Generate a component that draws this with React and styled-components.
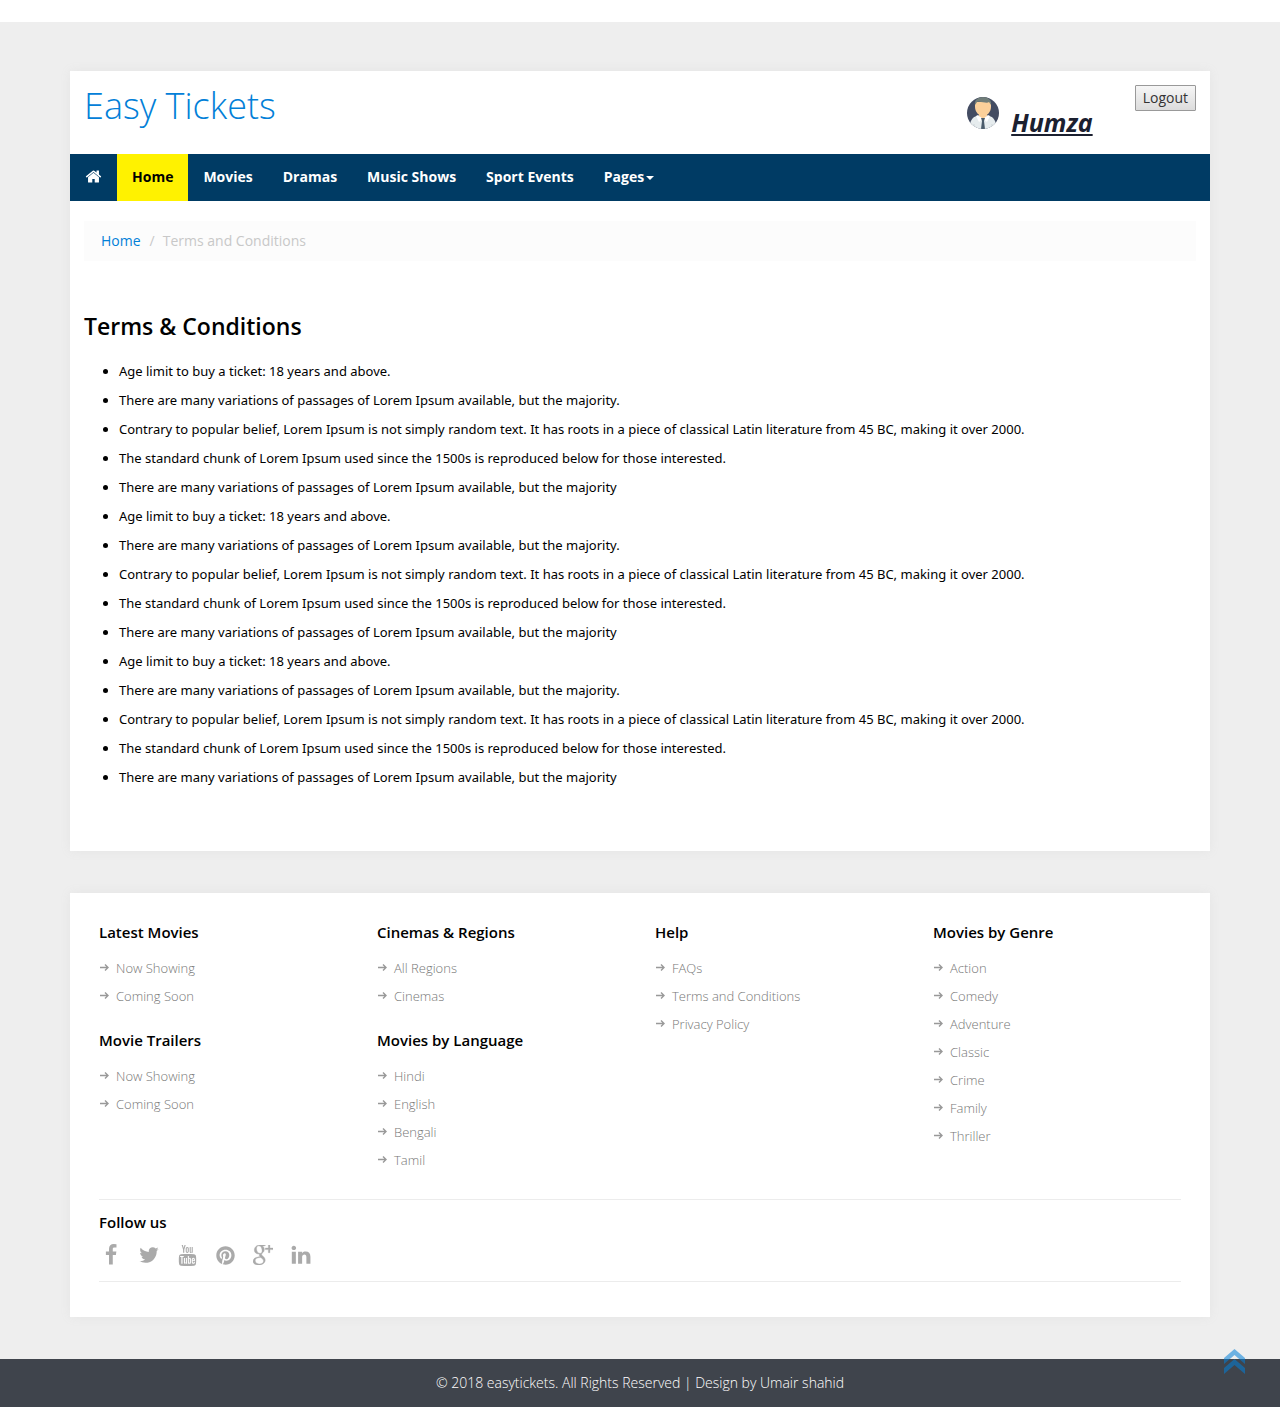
import React from "react";
import styled, { createGlobalStyle } from "styled-components";
import { FaPinterest } from "react-icons/fa";
import { TfiYoutube, TfiGoogle } from "react-icons/tfi";

const Global = createGlobalStyle`
  *, *::before, *::after { box-sizing: border-box; }
  body {
    margin: 0;
    padding-top: 22px;
    background: #fff;
    color: #000;
    font: 400 14px/20px "Open Sans", "Noto Sans", sans-serif;
  }
  a { color: inherit; text-decoration: none; }
  h1, h2, h3, ul, ol, p { margin: 0; padding: 0; font-weight: inherit; }
`;

const Page = styled.div`
  display: flex;
  flex-direction: column;
  gap: 42px;
  padding: 49px 70px 42px;
  background: #eee;
`;

const Card = styled.div`
  width: 100%;
  max-width: 1140px;
  margin: 0 auto;
  background: #fff;
  box-shadow: 0 0 10px #e4e4e4;
`;

const Header = styled.header`
  display: flex;
  align-items: flex-start;
  justify-content: space-between;
  padding: 14px 14px 19px;
`;

const Brand = styled.h1`
  color: #0280d8;
  font-size: 36px;
  line-height: 41px;
  font-weight: 300;
`;

const Account = styled.div`
  display: flex;
  align-items: flex-start;
  gap: 42px;
`;

const Profile = styled.a`
  display: flex;
  gap: 12px;
  padding-top: 12px;
  color: #1b2030;
  font: italic 700 25px/26px "Open Sans", sans-serif;
  text-decoration: underline;
  span { padding-top: 12px; }
`;

const Logout = styled.button`
  height: 26px;
  padding: 0 7px;
  border: 1px solid #999;
  border-radius: 1px;
  background: linear-gradient(#f6f6f6, #dcdcdc);
  color: #333;
  font: 400 14px/20px "Open Sans", sans-serif;
`;

const Nav = styled.nav`
  display: flex;
  background: #003b64;
  font-weight: 700;
`;

const NavLink = styled.a`
  display: flex;
  align-items: center;
  gap: 2px;
  height: 47px;
  padding: 0 15px 2px;
  background: ${(p) => (p.$active ? "#fff200" : "transparent")};
  color: ${(p) => (p.$active ? "#000" : "#fff")};
`;

const Caret = styled.span`
  margin-top: 2px;
  border: 4px solid transparent;
  border-top-color: currentColor;
  border-bottom: 0;
`;

const Breadcrumb = styled.ol`
  display: flex;
  gap: 9px;
  margin: 20px 14px 0;
  padding: 10px 17px;
  list-style: none;
  background: #fcfcfc;
  color: #c8c8c8;
  a { color: #0280d8; }
  li + li::before { content: "/"; margin-right: 8px; }
`;

const Terms = styled.main`
  padding: 48px 14px 59px;
`;

const Title = styled.h2`
  font-size: 23px;
  line-height: 34px;
  font-weight: 600;
`;

const TermList = styled.ul`
  margin-top: 14px;
  padding-left: 35px;
  font: 400 13px/29px "Noto Sans", sans-serif;
`;

const Links = styled.footer`
  padding: 29px 29px 35px;
`;

const Columns = styled.div`
  display: grid;
  grid-template-columns: repeat(4, 1fr);
  column-gap: 30px;
  min-height: 277px;
`;

const Column = styled.div`
  display: flex;
  flex-direction: column;
  gap: 20px;
`;

const GroupTitle = styled.h3`
  font-size: 15px;
  line-height: 20px;
  font-weight: 600;
`;

const GroupList = styled.ul`
  margin-top: 12px;
  list-style: none;
`;

const GroupLink = styled.a`
  display: flex;
  align-items: center;
  gap: 6px;
  color: #777;
  font-size: 13px;
  line-height: 28px;
  font-weight: 300;
`;

const Follow = styled.section`
  padding: 12px 0 15px;
  border: solid #ececec;
  border-width: 1px 0;
`;

const Social = styled.ul`
  display: flex;
  gap: 16px;
  margin-top: 12px;
  padding-left: 1px;
  list-style: none;
  a {
    display: flex;
    align-items: center;
    justify-content: center;
    width: 22px;
    height: 22px;
    color: #aaa;
  }
`;

const Copyright = styled.div`
  padding: 14px 20px;
  background: #3f444c;
  color: #fff;
  font-weight: 300;
  text-align: center;
`;

const ToTop = styled.a`
  position: fixed;
  right: 35px;
  bottom: 32px;
  height: 26px;
`;

const glyphs = {
  home: "M1472 992v480q0 26-19 45t-45 19h-384v-384h-256v384h-384q-26 0-45-19t-19-45v-480q0-1 .5-3t.5-3l575-474 575 474q1 2 1 6zm223-69l-62 74q-8 9-21 11h-3q-13 0-21-7l-692-577-692 577q-12 8-24 7-13-2-21-11l-62-74q-8-10-7-23.5t11-21.5l719-599q32-26 76-26t76 26l244 204v-195q0-14 9-23t23-9h192q14 0 23 9t9 23v408l219 182q10 8 11 21.5t-7 23.5z",
  facebook: "M1343 12v264h-157q-86 0-116 36t-30 108v189h293l-39 296h-254v759h-306v-759h-255v-296h255v-218q0-186 104-288.5t277-102.5q147 0 228 12z",
  twitter: "M1684 408q-67 98-162 167 1 14 1 42 0 130-38 259.5t-115.5 248.5-184.5 210.5-258 146-323 54.5q-271 0-496-145 35 4 78 4 225 0 401-138-105-2-188-64.5t-114-159.5q33 5 61 5 43 0 85-11-112-23-185.5-111.5t-73.5-205.5v-4q68 38 146 41-66-44-105-115t-39-154q0-88 44-163 121 149 294.5 238.5t371.5 99.5q-8-38-8-74 0-134 94.5-228.5t228.5-94.5q140 0 236 102 109-21 205-78-37 115-142 178 93-10 186-50z",
  linkedin: "M477 625v991h-330v-991h330zm21-306q1 73-50.5 122t-135.5 49h-2q-82 0-132-49t-50-122q0-74 51.5-122.5t134.5-48.5 133 48.5 51 122.5zm1166 729v568h-329v-530q0-105-40.5-164.5t-126.5-59.5q-63 0-105.5 34.5t-63.5 85.5q-11 30-11 81v553h-329q2-399 2-647t-1-296l-1-48h329v144h-2q20-32 41-56t56.5-52 87-43.5 114.5-15.5q171 0 275 113.5t104 332.5z",
};

const Glyph = ({ name, size }) => (
  <svg width={size} height={size} viewBox="0 0 1792 1792" fill="currentColor" aria-hidden="true">
    <path d={glyphs[name]} />
  </svg>
);

const Arrow = () => (
  <svg width="11" height="11" viewBox="0 0 11 11" fill="none" stroke="#999" strokeWidth="1.4" aria-hidden="true">
    <path d="M1 4.5h8M6 1.5l3 3-3 3" />
  </svg>
);

const Avatar = () => (
  <svg width="32" height="32" viewBox="0 0 32 32" aria-hidden="true">
    <clipPath id="face"><circle cx="16" cy="16" r="16" /></clipPath>
    <g clipPath="url(#face)">
      <path fill="#434c62" d="M0 0h32v32H0z" />
      <path fill="#e6ecee" d="M2 32c1-8 3-12 8-13l6 2 6-2c5 1 7 5 8 13z" />
      <path fill="#fbd09a" d="M12 14h8v5l-4 4-4-4z" />
      <path fill="#fbd09a" d="M8 5h16v5c0 5-4 9-8 9s-8-4-8-9z" />
      <path fill="#707d79" d="M8 8C7 3 11 0 16 0s9 3 8 8l-2-3c-2 2-8-1-12 0z" />
      <path fill="#fff" d="M11 18l5 4-4 3-3-6zM21 18l-5 4 4 3 3-6z" />
      <path fill="#4b5c6c" d="M14 21h4l-1 3 1 8h-4l1-8z" />
      <path stroke="#cdd5d8" fill="none" d="M7 32v-5M25 32v-5" />
    </g>
  </svg>
);

const terms = [
  "Age limit to buy a ticket: 18 years and above.",
  "There are many variations of passages of Lorem Ipsum available, but the majority.",
  "Contrary to popular belief, Lorem Ipsum is not simply random text. It has roots in a piece of classical Latin literature from 45 BC, making it over 2000.",
  "The standard chunk of Lorem Ipsum used since the 1500s is reproduced below for those interested.",
  "There are many variations of passages of Lorem Ipsum available, but the majority",
];

const columns = [
  [["Latest Movies", ["Now Showing", "Coming Soon"]], ["Movie Trailers", ["Now Showing", "Coming Soon"]]],
  [["Cinemas & Regions", ["All Regions", "Cinemas"]], ["Movies by Language", ["Hindi", "English", "Bengali", "Tamil"]]],
  [["Help", ["FAQs", "Terms and Conditions", "Privacy Policy"]]],
  [["Movies by Genre", ["Action", "Comedy", "Adventure", "Classic", "Crime", "Family", "Thriller"]]],
];

const social = [
  ["Facebook", <Glyph name="facebook" size={22} />],
  ["Twitter", <Glyph name="twitter" size={22} />],
  ["YouTube", <TfiYoutube size={21} />],
  ["Pinterest", <FaPinterest size={19} />],
  ["Google Plus", <TfiGoogle size={20} strokeWidth="0.3" />],
  ["LinkedIn", <Glyph name="linkedin" size={22} />],
];

export default function App() {
  return (
    <>
      <Global />
      <Page>
        <Card>
          <Header>
            <Brand><a href="#home">Easy Tickets</a></Brand>
            <Account>
              <Profile href="#profile"><Avatar /><span>Humza</span></Profile>
              <Logout type="button">Logout</Logout>
            </Account>
          </Header>
          <Nav>
            <NavLink href="#home" aria-label="Start page"><Glyph name="home" size={17} /></NavLink>
            <NavLink href="#home" $active>Home</NavLink>
            {["Movies", "Dramas", "Music Shows", "Sport Events"].map((t) => (
              <NavLink href="#list" key={t}>{t}</NavLink>
            ))}
            <NavLink href="#pages">Pages<Caret /></NavLink>
          </Nav>
          <Breadcrumb>
            <li><a href="#home">Home</a></li>
            <li>Terms and Conditions</li>
          </Breadcrumb>
          <Terms>
            <Title>Terms &amp; Conditions</Title>
            <TermList>
              {[...terms, ...terms, ...terms].map((t, i) => <li key={i}>{t}</li>)}
            </TermList>
          </Terms>
        </Card>
        <Card>
          <Links>
            <Columns>
              {columns.map((groups, i) => (
                <Column key={i}>
                  {groups.map(([title, items]) => (
                    <section key={title}>
                      <GroupTitle>{title}</GroupTitle>
                      <GroupList>
                        {items.map((t) => (
                          <li key={t}><GroupLink href="#list"><Arrow />{t}</GroupLink></li>
                        ))}
                      </GroupList>
                    </section>
                  ))}
                </Column>
              ))}
            </Columns>
            <Follow>
              <GroupTitle>Follow us</GroupTitle>
              <Social>
                {social.map(([label, icon]) => (
                  <li key={label}><a href="#social" aria-label={label}>{icon}</a></li>
                ))}
              </Social>
            </Follow>
          </Links>
        </Card>
      </Page>
      <Copyright>© 2018 easytickets. All Rights Reserved | Design by Umair shahid</Copyright>
      <ToTop href="#top" aria-label="Back to top">
        <svg width="21" height="26" viewBox="0 0 21 26" fill="#0280d8" fillOpacity="0.55">
          <path d="M10.500 0L21 9v6L10.500 6 0 15V9zM10.500 10L21 19v6L10.500 16 0 25v-6z" />
        </svg>
      </ToTop>
    </>
  );
}
